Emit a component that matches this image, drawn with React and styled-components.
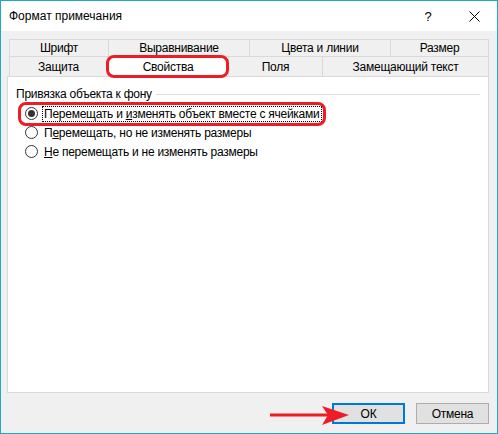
import React from "react";
import styled, { createGlobalStyle } from "styled-components";

const Global = createGlobalStyle`
  html, body { margin: 0; padding: 0; background: #fff; }
  body { font-family: "Liberation Sans", Arial, sans-serif; font-size: 12px; color: #000; }
  * { box-sizing: border-box; }
`;

const Window = styled.div`
  width: 498px;
  height: 434px;
  border: 1px solid #1fa9c8;
  display: flex;
  flex-direction: column;
  overflow: hidden;
`;

const TitleBar = styled.div`
  height: 30px;
  background: #fff;
  display: flex;
  align-items: center;
  padding-left: 8px;
  flex: none;
`;

const Title = styled.div`
  flex: 1;
  font-size: 12px;
  color: #000;
`;

const TitleButton = styled.div`
  width: ${(p) => p.$w}px;
  height: 30px;
  display: flex;
  align-items: center;
  justify-content: center;
  font-size: 13px;
  color: #000;
`;

const Body = styled.div`
  flex: 1;
  background: #f0f0f0;
  display: flex;
  flex-direction: column;
  padding: 8px 8px 0 6px;
  letter-spacing: -0.25px;
`;

const TabStrip = styled.div`
  display: flex;
  flex-direction: column;
  padding-left: 2px;
`;

const TabRow = styled.div`
  display: flex;
  height: ${(p) => p.$h}px;
`;

const Tab = styled.div`
  position: relative;
  width: ${(p) => p.$w}px;
  border: 1px solid #d9d9d9;
  border-left: ${(p) => (p.$first ? "1px solid #d9d9d9" : "none")};
  border-bottom: none;
  background: ${(p) => (p.$active ? "#fff" : "#f0f0f0")};
  display: flex;
  align-items: center;
  justify-content: center;
  font-size: 12px;
  color: #000;
`;

const Highlight = styled.div`
  position: absolute;
  left: ${(p) => p.$l}px;
  top: ${(p) => p.$t}px;
  right: ${(p) => p.$r}px;
  bottom: ${(p) => p.$b}px;
  border: 3px solid #ee1c25;
  border-radius: 8px;
  pointer-events: none;
`;

const Panel = styled.div`
  height: 317px;
  background: #fff;
  border: 1px solid #d9d9d9;
  padding: 9px 8px 0 8px;
`;

const GroupTitle = styled.div`
  display: flex;
  align-items: center;
  gap: 4px;
  height: 15px;
  &::after {
    content: "";
    flex: 1;
    height: 1px;
    background: #dcdcdc;
    margin-top: 1px;
  }
`;

const Options = styled.div`
  display: flex;
  flex-direction: column;
  padding-left: 9px;
  margin-top: 3px;
`;

const Option = styled.label`
  position: relative;
  display: flex;
  align-items: center;
  gap: 4px;
  height: 19px;
`;

const Radio = styled.span`
  width: 13px;
  height: 13px;
  border-radius: 50%;
  border: 1px solid #333;
  background: #fff;
  display: flex;
  align-items: center;
  justify-content: center;
  flex: none;
  &::after {
    content: "";
    width: 7px;
    height: 7px;
    border-radius: 50%;
    background: ${(p) => (p.$checked ? "#333" : "transparent")};
  }
`;

const OptionText = styled.span`
  padding: 0 1px;
  border: 1px dotted ${(p) => (p.$focus ? "#000" : "transparent")};
  line-height: 14px;
`;

const U = styled.span`
  text-decoration: underline;
`;

const ButtonRow = styled.div`
  position: relative;
  display: flex;
  justify-content: flex-end;
  gap: 11px;
  padding-top: 10px;
`;

const Button = styled.div`
  width: 73px;
  height: 21px;
  display: flex;
  align-items: center;
  justify-content: center;
  background: #e1e1e1;
  border: ${(p) => (p.$default ? "2px solid #0078d7" : "1px solid #adadad")};
  font-size: 12px;
`;

const Arrow = styled.svg`
  position: absolute;
  left: 263px;
  top: 12px;
`;

export default function App() {
  return (
    <>
      <Global />
      <Window>
        <TitleBar>
          <Title>Формат примечания</Title>
          <TitleButton $w={46}>?</TitleButton>
          <TitleButton $w={46}>
            <svg width="11" height="11" viewBox="0 0 11 11">
              <path d="M0.5 0.5 L10.5 10.5 M10.5 0.5 L0.5 10.5" stroke="#000" strokeWidth="1" />
            </svg>
          </TitleButton>
        </TitleBar>
        <Body>
          <TabStrip>
            <TabRow $h={17}>
              <Tab $w={100} $first>Шрифт</Tab>
              <Tab $w={141}>Выравнивание</Tab>
              <Tab $w={141}>Цвета и линии</Tab>
              <Tab $w={98}>Размер</Tab>
            </TabRow>
            <TabRow $h={20}>
              <Tab $w={99} $first>Защита</Tab>
              <Tab $w={121} $active>
                Свойства
                <Highlight $l={-2} $t={-2} $r={-1} $b={-2} />
              </Tab>
              <Tab $w={94}>Поля</Tab>
              <Tab $w={166}>Замещающий текст</Tab>
            </TabRow>
          </TabStrip>
          <Panel>
            <GroupTitle>Привязка объекта к фону</GroupTitle>
            <Options>
              <Option>
                <Radio $checked />
                <OptionText $focus>
                  Перемещать и <U>и</U>зменять объект вместе с ячейками
                </OptionText>
                <Highlight $l={-7} $t={-2} $r={-8} $b={-3} style={{ right: "auto", width: 308 }} />
              </Option>
              <Option>
                <Radio />
                <OptionText>
                  П<U>е</U>ремещать, но не изменять размеры
                </OptionText>
              </Option>
              <Option>
                <Radio />
                <OptionText>
                  <U>Н</U>е перемещать и не изменять размеры
                </OptionText>
              </Option>
            </Options>
          </Panel>
          <ButtonRow>
            <Arrow width="80" height="22" viewBox="0 0 80 22">
              <path d="M0 10 L58 10" stroke="#ee1c25" strokeWidth="3" />
              <path d="M52 1 L79 10 L52 20 L58 10 Z" fill="#ee1c25" />
            </Arrow>
            <Button $default>ОК</Button>
            <Button>Отмена</Button>
          </ButtonRow>
        </Body>
      </Window>
    </>
  );
}
